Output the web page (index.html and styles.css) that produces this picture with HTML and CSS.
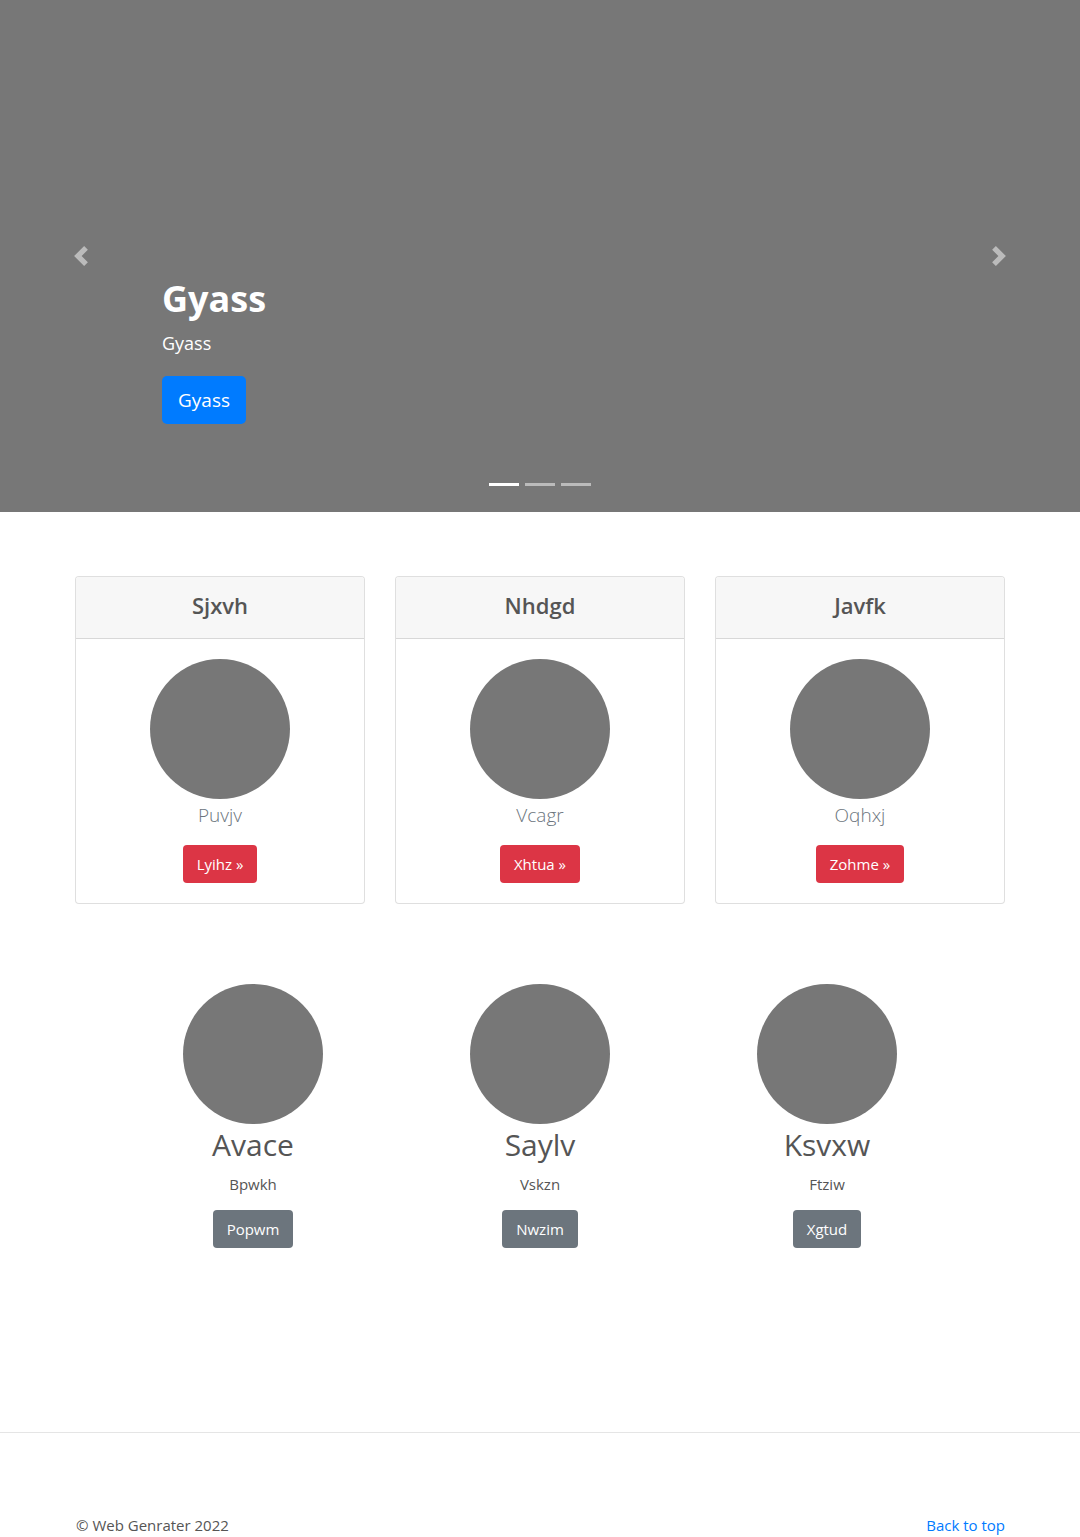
FILE: index.html
```html
<!DOCTYPE html>
<html lang="en">
<head>
<meta charset="utf-8">
<title>Web Genrater</title>
<link rel="stylesheet" href="styles.css">
</head>
<body>
<header class="hero">
  <div class="hero-caption">
    <h1 class="hero-title">Gyass</h1>
    <p class="hero-text">Gyass</p>
    <p class="hero-action"><a class="btn btn-lg btn-primary" href="#">Gyass</a></p>
  </div>
  <a class="hero-control hero-prev" href="#" aria-label="Previous">
    <svg width="20" height="20" viewBox="0 0 8 8" fill="#fff"><path d="M5.25 0l-4 4 4 4 1.5-1.5L4.25 4l2.5-2.5L5.25 0z"/></svg>
  </a>
  <a class="hero-control hero-next" href="#" aria-label="Next">
    <svg width="20" height="20" viewBox="0 0 8 8" fill="#fff"><path d="M2.75 0l-1.5 1.5L3.75 4l-2.5 2.5L2.75 8l4-4-4-4z"/></svg>
  </a>
  <ol class="hero-indicators">
    <li class="indicator active"></li>
    <li class="indicator"></li>
    <li class="indicator"></li>
  </ol>
</header>

<main class="container">
  <section class="card-row">
    <div class="card">
      <div class="card-header"><h4 class="card-title">Sjxvh</h4></div>
      <div class="card-body">
        <div class="circle"></div>
        <p class="lead-muted">Puvjv</p>
        <a class="btn btn-danger" href="#">Lyihz &raquo;</a>
      </div>
    </div>
    <div class="card">
      <div class="card-header"><h4 class="card-title">Nhdgd</h4></div>
      <div class="card-body">
        <div class="circle"></div>
        <p class="lead-muted">Vcagr</p>
        <a class="btn btn-danger" href="#">Xhtua &raquo;</a>
      </div>
    </div>
    <div class="card">
      <div class="card-header"><h4 class="card-title">Javfk</h4></div>
      <div class="card-body">
        <div class="circle"></div>
        <p class="lead-muted">Oqhxj</p>
        <a class="btn btn-danger" href="#">Zohme &raquo;</a>
      </div>
    </div>
  </section>

  <section class="feature-row">
    <div class="feature">
      <div class="circle"></div>
      <h2 class="feature-title">Avace</h2>
      <p class="feature-text">Bpwkh</p>
      <a class="btn btn-secondary" href="#">Popwm</a>
    </div>
    <div class="feature">
      <div class="circle"></div>
      <h2 class="feature-title">Saylv</h2>
      <p class="feature-text">Vskzn</p>
      <a class="btn btn-secondary" href="#">Nwzim</a>
    </div>
    <div class="feature">
      <div class="circle"></div>
      <h2 class="feature-title">Ksvxw</h2>
      <p class="feature-text">Ftziw</p>
      <a class="btn btn-secondary" href="#">Xgtud</a>
    </div>
  </section>
</main>

<hr class="divider">

<footer class="container footer">
  <p class="footer-copy">&copy; Web Genrater 2022</p>
  <p class="footer-top"><a href="#">Back to top</a></p>
</footer>
</body>
</html>
```

FILE: styles.css
```css
* { box-sizing: border-box; }

html, body {
  margin: 0;
  padding: 0;
}

body {
  font-family: "Open Sans", "Noto Sans", "Liberation Sans", sans-serif;
  font-size: 16px;
  line-height: 1.5;
  color: #555;
  background: #fff;
}

a { text-decoration: none; }

/* ---------- hero carousel ---------- */
.hero {
  position: relative;
  height: 512px;
  background: #777;
}

.hero-caption {
  position: absolute;
  left: 15%;
  right: 15%;
  bottom: 52px;
  padding: 20px 0;
  color: #fff;
  text-align: left;
}

.hero-title {
  margin: 0 0 10px;
  font-size: 36px;
  line-height: 44px;
  font-weight: 700;
}

.hero-text {
  margin: 0 0 16px;
  font-size: 18px;
  line-height: 24px;
}

.hero-action {
  margin: 0 0 16px;
  padding-top: 5px;
  line-height: 0;
}

.hero-control {
  position: absolute;
  top: 0;
  bottom: 0;
  width: 15%;
  display: flex;
  align-items: center;
  justify-content: center;
  opacity: .5;
}
.hero-prev { left: 0; }
.hero-next { right: 0; }
.hero-control svg { display: block; }

.hero-indicators {
  position: absolute;
  left: 0;
  right: 0;
  bottom: 26px;
  margin: 0;
  padding: 0;
  list-style: none;
  display: flex;
  justify-content: center;
  gap: 6px;
}

.indicator {
  width: 30px;
  height: 3px;
  background: #fff;
  opacity: .5;
}
.indicator.active { opacity: 1; }

/* ---------- buttons ---------- */
.btn {
  display: inline-block;
  color: #fff;
  font-size: 15px;
  line-height: 24px;
  padding: 7px 14px;
  border-radius: 4px;
  font-weight: 400;
}

.btn-lg {
  font-size: 19px;
  line-height: 30px;
  padding: 9px 16px;
  border-radius: 5px;
}

.btn-primary { background: #007bff; }
.btn-danger { background: #dc3545; }
.btn-secondary { background: #6c757d; }

/* ---------- layout ---------- */
.container {
  width: 930px;
  margin: 0 auto;
}

.card-row {
  margin-top: 64px;
  display: grid;
  grid-template-columns: repeat(3, 1fr);
  gap: 30px;
}

.card {
  border: 1px solid rgba(0, 0, 0, .125);
  border-radius: 4px;
  background: #fff;
  overflow: hidden;
}

.card-header {
  background: #f7f7f7;
  border-bottom: 1px solid rgba(0, 0, 0, .125);
  padding: 13px 20px 18px;
  text-align: center;
}

.card-title {
  margin: 0;
  font-size: 22px;
  line-height: 30px;
  font-weight: 600;
  color: #555;
}

.card-body {
  padding: 20px;
  text-align: center;
}

.circle {
  width: 140px;
  height: 140px;
  border-radius: 50%;
  background: #777;
  margin: 0 auto;
}

.lead-muted {
  margin: 1px 0 15px;
  font-size: 19px;
  line-height: 30px;
  font-weight: 300;
  color: #6c757d;
}

.feature-row {
  margin: 80px auto 0;
  width: 861px;
  display: grid;
  grid-template-columns: repeat(3, 1fr);
  text-align: center;
}

.feature-title {
  margin: 2px 0 8px;
  font-size: 30px;
  line-height: 38px;
  font-weight: 400;
  color: #555;
}

.feature-text {
  margin: 0 0 14px;
  font-size: 15px;
  line-height: 24px;
  color: #555;
}

.divider {
  margin: 184px 0 0;
  border: 0;
  border-top: 1px solid #e5e5e5;
  height: 0;
}

.footer {
  padding: 80px 0 48px;
  display: flex;
  justify-content: space-between;
}

.footer-copy,
.footer-top {
  margin: 0;
  font-size: 15px;
  line-height: 24px;
}

.footer-copy { padding-left: 1px; }

.footer-top a { color: #007bff; }
```
